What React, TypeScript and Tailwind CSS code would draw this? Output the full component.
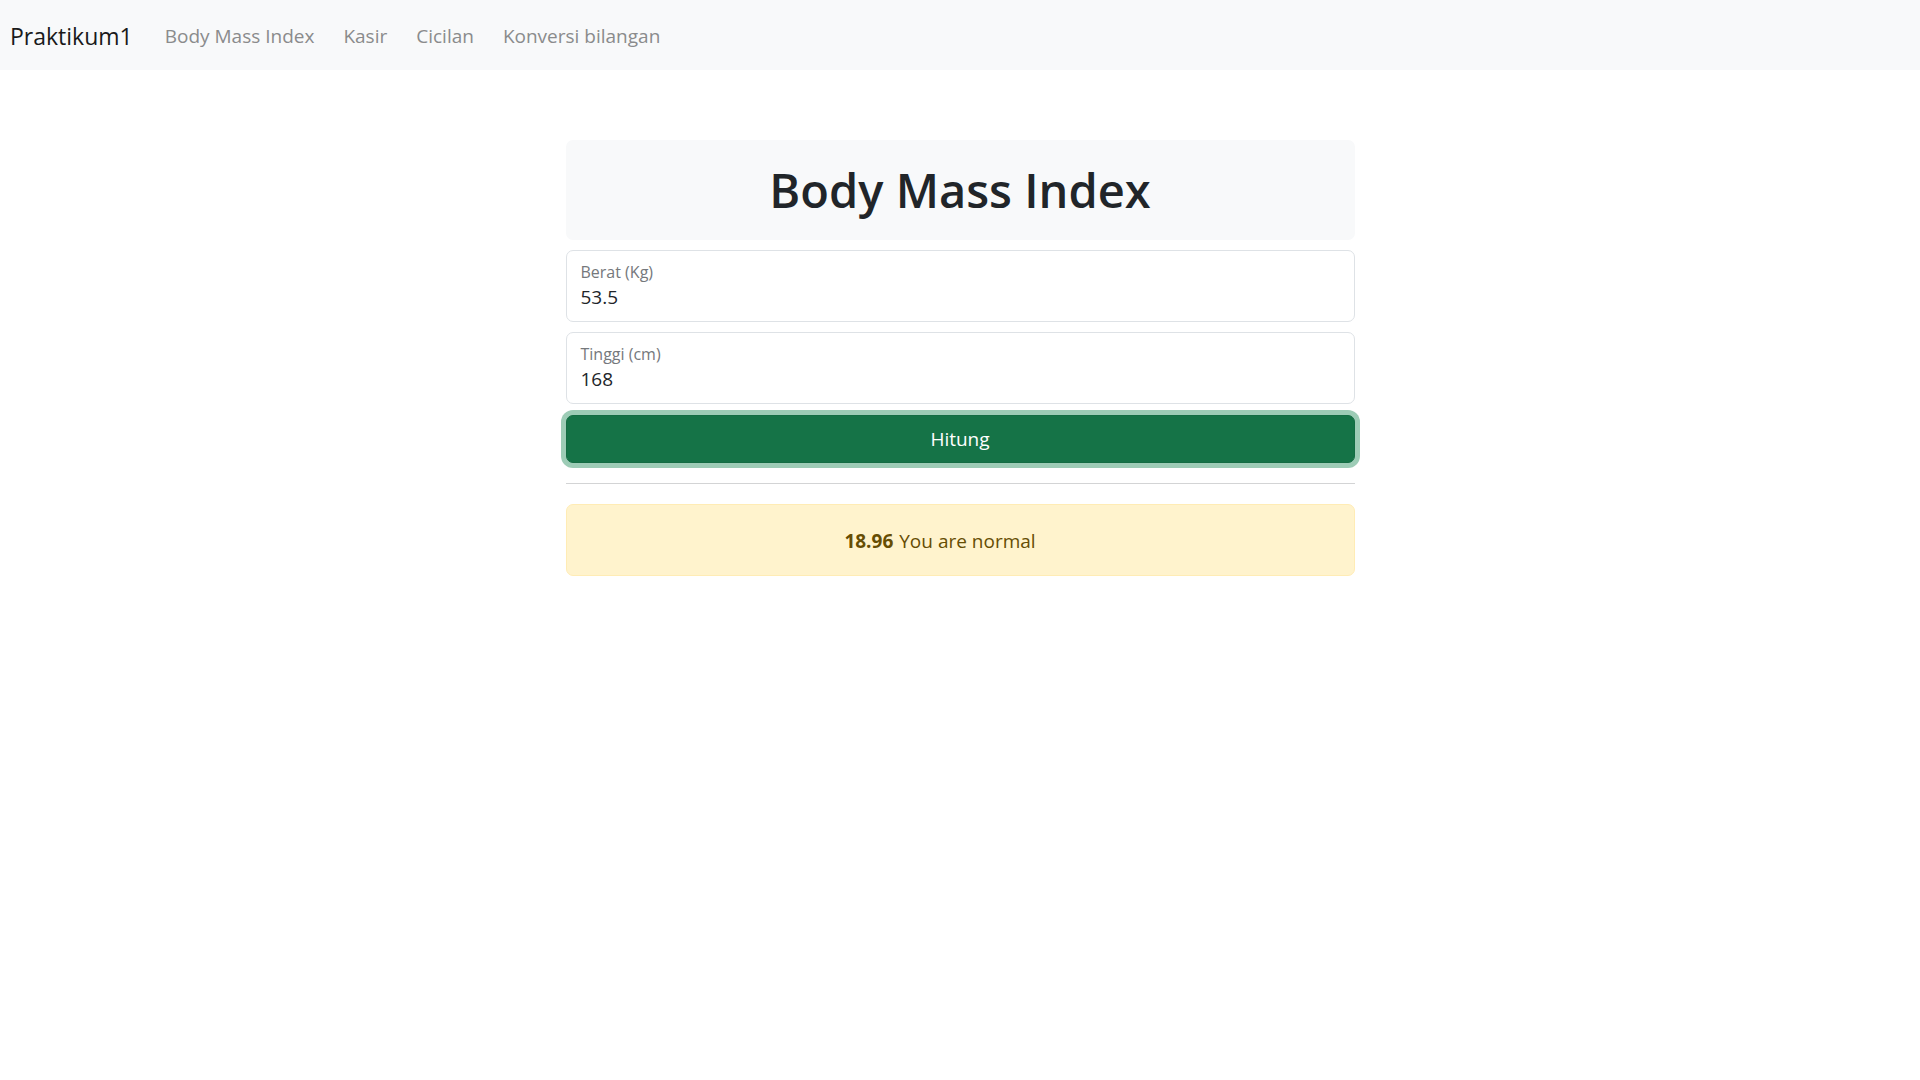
const NAV_LINKS = ["Body Mass Index", "Kasir", "Cicilan", "Konversi bilangan"];

function Field({ label, value }: { label: string; value: string }) {
  return (
    <div className="h-[72px] rounded-[7px] border border-[#dee2e6] bg-white px-[14px] pt-[10px]">
      <div className="text-[16px] leading-[22px] text-[#75787c]">{label}</div>
      <div className="text-[19px] leading-[29px] text-[#212529]">{value}</div>
    </div>
  );
}

export default function App() {
  return (
    <div className="min-h-screen bg-white font-['Open_Sans',sans-serif] text-[#212529]">
      <nav className="flex h-[70px] items-center bg-[#f8f9fa] pl-[10px] pt-[2px]">
        <span className="mr-[32px] text-[23px] text-[#1a1a1a]">Praktikum1</span>
        <ul className="flex gap-[29px] text-[19px] text-[#8a8b8c]">
          {NAV_LINKS.map((text) => (
            <li key={text}>{text}</li>
          ))}
        </ul>
      </nav>

      <main className="mx-auto mt-[70px] flex w-[789px] flex-col">
        <div className="flex h-[100px] items-center justify-center rounded-[7px] bg-[#f8f9fa]">
          <h1 className="text-[47px] font-semibold leading-[60px] text-[#212529]">Body Mass Index</h1>
        </div>

        <div className="mt-[10px] flex flex-col gap-[10px]">
          <Field label="Berat (Kg)" value="53.5" />
          <Field label="Tinggi (cm)" value="168" />
        </div>

        <button className="mt-[11px] h-[48px] rounded-[7px] border border-[#146c43] bg-[#157347] text-[19px] text-white shadow-[0_0_0_5px_rgba(60,153,110,0.5)]">
          Hitung
        </button>

        <hr className="my-[20px] border-t border-[#d3d4d5]" />

        <div className="flex h-[72px] items-center justify-center rounded-[7px] border border-[#ffecb5] bg-[#fff3cd] pr-[40px] pt-[2px] text-[19px] text-[#664d03]">
          <b className="mr-[6px] font-bold">18.96</b> You are normal
        </div>
      </main>
    </div>
  );
}
